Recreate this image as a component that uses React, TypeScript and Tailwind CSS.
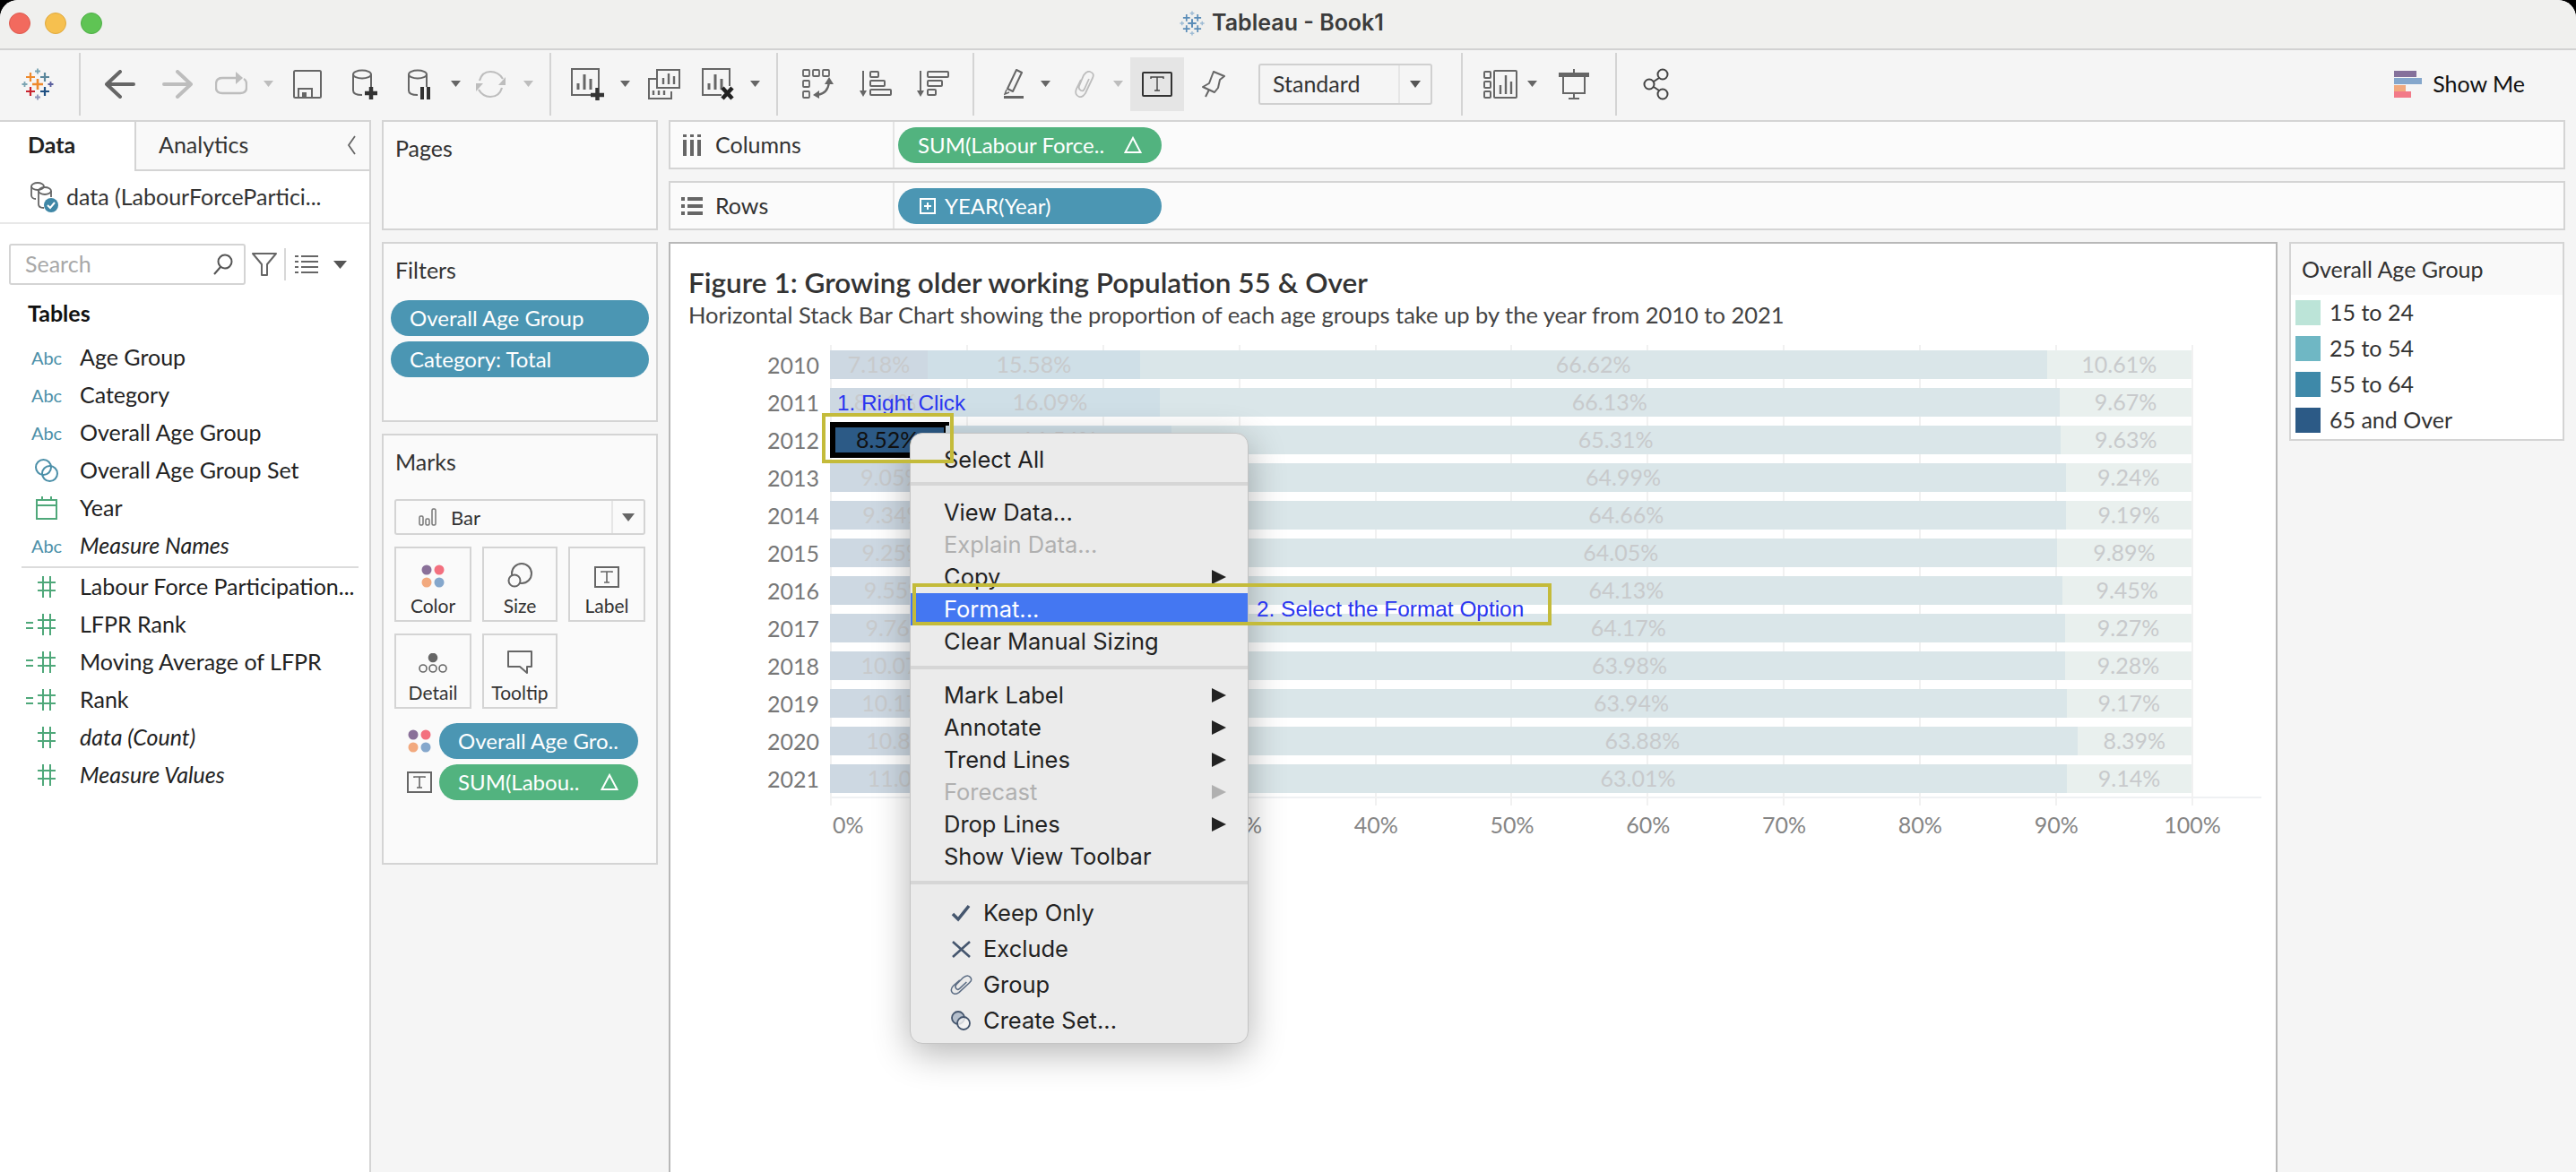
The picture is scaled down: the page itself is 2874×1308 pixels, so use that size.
import type { ReactNode } from "react";

const years = [
  { y: "2010", v: [7.18, 15.58, 66.62, 10.61] },
  { y: "2011", v: [8.11, 16.09, 66.13, 9.67] },
  { y: "2012", v: [8.52, 16.54, 65.31, 9.63] },
  { y: "2013", v: [9.05, 16.72, 64.99, 9.24] },
  { y: "2014", v: [9.34, 16.81, 64.66, 9.19] },
  { y: "2015", v: [9.25, 16.81, 64.05, 9.89] },
  { y: "2016", v: [9.55, 16.87, 64.13, 9.45] },
  { y: "2017", v: [9.76, 16.8, 64.17, 9.27] },
  { y: "2018", v: [10.07, 16.67, 63.98, 9.28] },
  { y: "2019", v: [10.17, 16.72, 63.94, 9.17] },
  { y: "2020", v: [10.84, 16.89, 63.88, 8.39] },
  { y: "2021", v: [11.02, 16.83, 63.01, 9.14] },
];

const segColors = ["bg-[#cdd8e2]", "bg-[#cfdfe7]", "bg-[#dae6e9]", "bg-[#e9f0ee]"];
const ticks = ["0%", "10%", "20%", "30%", "40%", "50%", "60%", "70%", "80%", "90%", "100%"];

const Caret = ({ ml, light }: { ml: string; light?: boolean }) => (
  <svg width="11" height="8" viewBox="0 0 11 8" className={`${ml} shrink-0`}>
    <path d="M0 0H11L5.5 7Z" fill={light ? "#bdbdbd" : "#666"} />
  </svg>
);

const Sep = ({ ml }: { ml: string }) => <div className={`${ml} w-[2px] h-[70px] bg-[#d4d4d4] shrink-0`} />;

const Cross = ({ x, y, s, w, c }: { x: number; y: number; s: number; w: number; c: string }) => (
  <path d={`M${x - s} ${y}H${x + s}M${x} ${y - s}V${y + s}`} stroke={c} strokeWidth={w} />
);

const TableauLogo = ({ size = 36, mono }: { size?: number; mono?: boolean }) => (
  <svg width={size} height={size} viewBox="0 0 36 36" className="shrink-0">
    <Cross x={18} y={18} s={6} w={2.6} c={mono ? "#5b8db8" : "#ee8a2c"} />
    <Cross x={10} y={10} s={5} w={2.2} c={mono ? "#5b8db8" : "#ee8a2c"} />
    <Cross x={26} y={10} s={5} w={2.2} c={mono ? "#5b8db8" : "#5b879c"} />
    <Cross x={10} y={26} s={5} w={2.2} c={mono ? "#5b8db8" : "#c9252f"} />
    <Cross x={26} y={26} s={5} w={2.2} c={mono ? "#5b8db8" : "#1f4f82"} />
    <Cross x={18} y={3.5} s={3} w={1.8} c={mono ? "#9dbbd4" : "#7ba4b2"} />
    <Cross x={18} y={32.5} s={3} w={1.8} c={mono ? "#9dbbd4" : "#8a94bb"} />
    <Cross x={3.5} y={18} s={3} w={1.8} c={mono ? "#9dbbd4" : "#7ba4b2"} />
    <Cross x={32.5} y={18} s={3} w={1.8} c={mono ? "#9dbbd4" : "#5a5f9e"} />
  </svg>
);

const Arrow = ({ ml, flip, c }: { ml: string; flip?: boolean; c: string }) => (
  <svg width="34" height="32" viewBox="0 0 34 32" className={`${ml} shrink-0 ${flip ? "-scale-x-100" : ""}`}>
    <path d="M2 16H32M17 2L2 16L17 30" fill="none" stroke={c} strokeWidth="4" strokeLinecap="round" strokeLinejoin="round" />
  </svg>
);

const RedoIcon = ({ ml }: { ml: string }) => (
  <svg width="36" height="32" viewBox="0 0 36 32" className={`${ml} shrink-0`}>
    <path d="M24 9H8C3 9 1 12 1 16V20C1 24 3 26 8 26H28C32 26 35 24 35 20V16C35 13 34 11 32 10" fill="none" stroke="#bdbdbd" strokeWidth="2.4" />
    <path d="M23 2L31 9L23 16Z" fill="#bdbdbd" />
  </svg>
);

const SaveIcon = ({ ml }: { ml: string }) => (
  <svg width="32" height="32" viewBox="0 0 32 32" className={`${ml} shrink-0`}>
    <rect x="1" y="1" width="30" height="30" rx="1.5" fill="none" stroke="#666" strokeWidth="2" />
    <path d="M6 31V21H21V31" fill="none" stroke="#666" strokeWidth="2" />
    <rect x="10" y="25" width="5" height="6" fill="#666" />
  </svg>
);

const Cylinder = ({ children, w, ml }: { children: ReactNode; w: number; ml: string }) => (
  <svg width={w} height="34" viewBox={`0 0 ${w} 34`} className={`${ml} shrink-0`}>
    <ellipse cx="11" cy="6" rx="10" ry="4.5" fill="none" stroke="#666" strokeWidth="2" />
    <path d="M1 6V24C1 27 4 29 11 29M21 6V20" fill="none" stroke="#666" strokeWidth="2" />
    {children}
  </svg>
);

const RefreshIcon = ({ ml }: { ml: string }) => (
  <svg width="33" height="32" viewBox="0 0 33 32" className={`${ml} shrink-0`}>
    <path d="M4 12C6 5 11 2 16 2C22 2 27 5 30 10M29 20C27 27 22 30 16 30C11 30 6 27 3 22" fill="none" stroke="#bdbdbd" strokeWidth="2.2" />
    <path d="M33 8V17H25Z" fill="#bdbdbd" />
    <path d="M0 24V15H8Z" fill="#bdbdbd" />
  </svg>
);

const SheetBars = ({ x = 0, y = 0 }: { x?: number; y?: number }) => (
  <g transform={`translate(${x} ${y})`}>
    <path d="M8 24V17M15 24V7M22 24V12" stroke="#666" strokeWidth="3" fill="none" />
  </g>
);

const NewSheetIcon = ({ ml }: { ml: string }) => (
  <svg width="37" height="36" viewBox="0 0 37 36" className={`${ml} shrink-0`}>
    <path d="M23 30H1V1H31V22" fill="none" stroke="#666" strokeWidth="2" />
    <SheetBars />
    <path d="M22 30H37M29.5 22V36" stroke="#333" strokeWidth="4.5" />
  </svg>
);

const DupIcon = ({ ml }: { ml: string }) => (
  <svg width="36" height="34" viewBox="0 0 36 34" className={`${ml} shrink-0`}>
    <path d="M9 11H1V33H26V25" fill="none" stroke="#666" strokeWidth="2" />
    <rect x="10" y="1" width="25" height="20" fill="none" stroke="#666" strokeWidth="2" />
    <path d="M17 17V10M23 17V5M29 17V8" stroke="#666" strokeWidth="2.4" />
    <path d="M6 24V29M12 24V29M18 24V29" stroke="#666" strokeWidth="2.4" />
  </svg>
);

const ClearIcon = ({ ml }: { ml: string }) => (
  <svg width="36" height="36" viewBox="0 0 36 36" className={`${ml} shrink-0`}>
    <path d="M22 30H1V1H31V20" fill="none" stroke="#666" strokeWidth="2" />
    <SheetBars />
    <path d="M23 22L34 34M34 22L23 34" stroke="#222" strokeWidth="4.5" />
  </svg>
);

const SwapIcon = ({ ml }: { ml: string }) => (
  <svg width="35" height="34" viewBox="0 0 35 34" className={`${ml} shrink-0`}>
    <g fill="none" stroke="#666" strokeWidth="1.8">
      <rect x="1" y="1" width="7" height="7" rx="1" />
      <rect x="12" y="1" width="7" height="7" rx="1" />
      <rect x="23" y="1" width="7" height="7" rx="1" />
      <rect x="1" y="13" width="7" height="7" rx="1" />
      <rect x="1" y="25" width="7" height="7" rx="1" />
      <path d="M17 29C24 28 29 23 30 15" strokeWidth="2.2" />
    </g>
    <path d="M30 9L35 17H25Z M12 29L19 24V33Z" fill="#666" />
  </svg>
);

const SortIcon = ({ ml, desc }: { ml: string; desc?: boolean }) => (
  <svg width="36" height="30" viewBox="0 0 36 30" className={`${ml} shrink-0`}>
    <path d="M4 0V24" stroke="#666" strokeWidth="2" />
    <path d="M0 22H8L4 29Z" fill="#666" />
    <g fill="none" stroke="#666" strokeWidth="2">
      <rect x="12" y="1" width={desc ? 23 : 9} height="6" rx="1" />
      <rect x="12" y="11" width="16" height="6" rx="1" />
      <rect x="12" y="21" width={desc ? 9 : 23} height="6" rx="1" />
    </g>
  </svg>
);

const PenIcon = ({ ml }: { ml: string }) => (
  <svg width="22" height="34" viewBox="0 0 22 34" className={`${ml} shrink-0`}>
    <path d="M14 1L20 4L10 25L4 22Z" fill="none" stroke="#666" strokeWidth="2" strokeLinejoin="round" />
    <path d="M3 23L1 28L6 26" fill="none" stroke="#666" strokeWidth="1.5" />
    <rect x="0" y="30" width="22" height="3" fill="#666" />
  </svg>
);

const ClipIcon = ({ ml, c = "#bdbdbd", w = 25, h = 30 }: { ml: string; c?: string; w?: number; h?: number }) => (
  <svg width={w} height={h} viewBox="0 0 25 30" className={`${ml} shrink-0`}>
    <path d="M9 10L4 20C2 25 4 28 7 29C10 30 12 28 14 25L22 8C24 4 22 2 19 1C16 0 14 2 12 5L7 17C6 20 7 21 9 22C11 23 12 22 13 20L18 9" fill="none" stroke={c} strokeWidth="1.8" />
  </svg>
);

const PinIcon = ({ ml }: { ml: string }) => (
  <svg width="26" height="30" viewBox="0 0 26 30" className={`${ml} shrink-0`}>
    <path d="M13 1L25 6L20 10L18 19L14 24L1 18L8 14L11 6Z M8 21L4 29" fill="none" stroke="#666" strokeWidth="2" strokeLinejoin="round" />
  </svg>
);

const CardsIcon = ({ ml }: { ml: string }) => (
  <svg width="38" height="34" viewBox="0 0 38 34" className={`${ml} shrink-0`}>
    <g fill="none" stroke="#666" strokeWidth="2">
      <rect x="1" y="3" width="7" height="7" rx="1" />
      <rect x="1" y="14" width="7" height="7" rx="1" />
      <rect x="1" y="25" width="7" height="7" rx="1" />
      <rect x="12" y="2" width="25" height="30" rx="1" />
    </g>
    <path d="M19 28V18M25 28V7M31 28V14" stroke="#666" strokeWidth="2.4" />
  </svg>
);

const PresentIcon = ({ ml }: { ml: string }) => (
  <svg width="34" height="34" viewBox="0 0 34 34" className={`${ml} shrink-0`}>
    <path d="M17 0V4" stroke="#666" strokeWidth="2" />
    <rect x="0" y="4" width="34" height="5" fill="#666" />
    <path d="M5 9V27H29V9M17 27V33M11 33H23" fill="none" stroke="#666" strokeWidth="2" />
  </svg>
);

const ShareIcon = ({ ml }: { ml: string }) => (
  <svg width="29" height="36" viewBox="0 0 29 36" className={`${ml} shrink-0`}>
    <g fill="none" stroke="#444" strokeWidth="2">
      <circle cx="22" cy="7" r="5.5" />
      <circle cx="7" cy="18" r="5.5" />
      <circle cx="22" cy="29" r="5.5" />
      <path d="M12 15L18 11M12 21L18 25" />
    </g>
  </svg>
);

const ShowMeIcon = () => (
  <svg width="32" height="30" viewBox="0 0 32 30" className="shrink-0">
    <rect x="0" y="0" width="25" height="7" fill="#85719b" />
    <rect x="0" y="8" width="31" height="7" fill="#85a7cc" />
    <rect x="0" y="16" width="13" height="7" fill="#f2a97e" />
    <rect x="0" y="23" width="19" height="7" fill="#f27a88" />
  </svg>
);

const ColorDots = () => (
  <svg width="26" height="26" viewBox="0 0 26 26" className="shrink-0">
    <circle cx="6" cy="6" r="5.5" fill="#8a7099" />
    <circle cx="20" cy="6" r="5.5" fill="#f3707f" />
    <circle cx="6" cy="20" r="5.5" fill="#f2a97e" />
    <circle cx="20" cy="20" r="5.5" fill="#85a7cc" />
  </svg>
);

const LabelT = () => (
  <svg width="28" height="24" viewBox="0 0 28 24" className="shrink-0">
    <rect x="1" y="1" width="26" height="22" fill="none" stroke="#666" strokeWidth="2" />
    <path d="M8 7V6H20V7M14 6V18M11 18H17" fill="none" stroke="#666" strokeWidth="1.6" />
  </svg>
);

const FieldIcon = ({ kind }: { kind: string }) => {
  if (kind === "abc")
    return <span className="w-[64px] text-center text-[20px] text-[#4b8fa8]">Abc</span>;
  if (kind === "set")
    return (
      <span className="w-[64px] flex justify-center">
        <svg width="28" height="28" viewBox="0 0 28 28" fill="none" stroke="#4b8fa8" strokeWidth="2">
          <circle cx="10.5" cy="10.5" r="8.5" />
          <circle cx="17.5" cy="17.5" r="8.5" />
        </svg>
      </span>
    );
  if (kind === "date")
    return (
      <span className="w-[64px] flex justify-center">
        <svg width="24" height="26" viewBox="0 0 24 26" fill="none" stroke="#4fa87a" strokeWidth="2">
          <rect x="1" y="4" width="22" height="21" />
          <path d="M1 10H23M7 0V5M17 0V5" />
        </svg>
      </span>
    );
  return (
    <span className="w-[64px] flex justify-center relative">
      <svg width="22" height="26" viewBox="0 0 22 26" fill="none" stroke="#4fa87a" strokeWidth="2">
        <path d="M7 1V25M15 1V25M1 8H21M1 17H21" />
      </svg>
      {kind === "calc" && (
        <svg width="8" height="10" viewBox="0 0 8 10" className="absolute left-[9px] top-[9px]" stroke="#4fa87a" strokeWidth="2">
          <path d="M0 2H8M0 8H8" />
        </svg>
      )}
    </span>
  );
};

const fields = [
  { k: "abc", t: "Age Group" },
  { k: "abc", t: "Category" },
  { k: "abc", t: "Overall Age Group" },
  { k: "set", t: "Overall Age Group Set" },
  { k: "date", t: "Year" },
  { k: "abc", t: "Measure Names", i: true },
];

const measures = [
  { k: "num", t: "Labour Force Participation..." },
  { k: "calc", t: "LFPR Rank" },
  { k: "calc", t: "Moving Average of LFPR" },
  { k: "calc", t: "Rank" },
  { k: "num", t: "data (Count)", i: true },
  { k: "num", t: "Measure Values", i: true },
];

const FieldRow = ({ k, t, i }: { k: string; t: string; i?: boolean }) => (
  <div className="h-[42px] flex items-center pl-[20px]">
    <FieldIcon kind={k} />
    <span className={`ml-[5px] text-[25px] text-[#222] whitespace-nowrap ${i ? "italic" : ""}`}>{t}</span>
  </div>
);

const Pill = ({ color, className, children }: { color: string; className: string; children: ReactNode }) => (
  <div className={`${color} ${className} h-[40px] rounded-[20px] flex items-center text-white text-[24px] whitespace-nowrap`}>{children}</div>
);

const Delta = () => (
  <svg width="20" height="20" viewBox="0 0 20 20" className="shrink-0">
    <path d="M10 2L18.5 18H1.5Z" fill="none" stroke="#fff" strokeWidth="2" />
  </svg>
);

const MarkCard = ({ label, w, icon }: { label: string; w: string; icon: ReactNode }) => (
  <div className={`${w} h-[84px] border-2 border-[#d4d4d4] flex flex-col items-center`}>
    <div className="h-[44px] flex items-end">{icon}</div>
    <span className="mt-[8px] text-[21px] leading-[24px] text-[#333]">{label}</span>
  </div>
);

const MenuItem = ({ t, y, sub, off, on }: { t: string; y?: string; sub?: boolean; off?: boolean; on?: boolean }) => (
  <div className={`${y ?? "h-[36px]"} ${on ? "bg-[#4477f2] text-white" : off ? "text-[#b0b0b0]" : "text-[#222]"} pl-[37px] pr-[24px] flex items-center justify-between`}>
    <span>{t}</span>
    {sub && (
      <svg width="16" height="16" viewBox="0 0 16 16">
        <path d="M0 0L16 8L0 16Z" fill={off ? "#b0b0b0" : "#222"} />
      </svg>
    )}
  </div>
);

const IconItem = ({ t, icon }: { t: string; icon: ReactNode }) => (
  <div className="h-[40px] flex items-center text-[#222]">
    <span className="w-[81px] flex justify-end pr-[14px]">{icon}</span>
    <span>{t}</span>
  </div>
);

const MenuSep = ({ cls }: { cls: string }) => <div className={`${cls} h-[4px] bg-[#d6d6d6]`} />;

export default function App() {
  return (
    <div className="relative w-[2874px] h-[1308px] overflow-hidden bg-black font-[family-name:'Lato',sans-serif]">
      <div className="w-full h-full rounded-t-[20px] overflow-hidden bg-[#f5f5f5] flex flex-col">
        {/* title bar */}
        <div className="h-[56px] shrink-0 border-b-2 border-[#d2d2d2] bg-[#f0f0ee] relative flex items-center justify-center">
          <div className="absolute left-[10px] top-[14px] flex gap-[16px]">
            <div className="w-[24px] h-[24px] rounded-full bg-[#f26a5e] border border-[#dd5a4f]" />
            <div className="w-[24px] h-[24px] rounded-full bg-[#f6c04f] border border-[#dfa93e]" />
            <div className="w-[24px] h-[24px] rounded-full bg-[#5fc454] border border-[#4fae47]" />
          </div>
          <div className="flex items-center gap-[8px] ml-[-14px] pb-[2px]">
            <TableauLogo size={28} mono />
            <span className="text-[25px] font-semibold text-[#3c3c3c] font-[family-name:'Inter',sans-serif]">Tableau - Book1</span>
          </div>
        </div>

        {/* toolbar */}
        <div className="h-[78px] shrink-0 flex items-center pb-[2px]">
          <div className="ml-[24px]">
            <TableauLogo />
          </div>
          <Sep ml="ml-[28px]" />
          <Arrow ml="ml-[27px]" c="#666" />
          <Arrow ml="ml-[30px]" c="#bdbdbd" flip />
          <RedoIcon ml="ml-[25px]" />
          <Caret ml="ml-[18px]" light />
          <SaveIcon ml="ml-[22px]" />
          <Cylinder w={28} ml="ml-[34px]">
            <path d="M14 27H28M21 20V34" stroke="#333" strokeWidth="4.5" />
          </Cylinder>
          <Cylinder w={26} ml="ml-[34px]">
            <path d="M16 20V34M23 20V34" stroke="#333" strokeWidth="4" />
          </Cylinder>
          <Caret ml="ml-[22px]" />
          <RefreshIcon ml="ml-[17px]" />
          <Caret ml="ml-[20px]" light />
          <Sep ml="ml-[18px]" />
          <NewSheetIcon ml="ml-[22px]" />
          <Caret ml="ml-[18px]" />
          <DupIcon ml="ml-[20px]" />
          <ClearIcon ml="ml-[24px]" />
          <Caret ml="ml-[18px]" />
          <Sep ml="ml-[18px]" />
          <SwapIcon ml="ml-[27px]" />
          <SortIcon ml="ml-[29px]" />
          <SortIcon ml="ml-[28px]" desc />
          <Sep ml="ml-[26px]" />
          <PenIcon ml="ml-[33px]" />
          <Caret ml="ml-[19px]" />
          <ClipIcon ml="ml-[25px]" />
          <Caret ml="ml-[20px]" light />
          <div className="ml-[8px] w-[60px] h-[60px] bg-[#e5e5e5] flex items-center justify-center shrink-0">
            <svg width="34" height="28" viewBox="0 0 34 28">
              <rect x="1" y="1" width="32" height="26" rx="1" fill="none" stroke="#333" strokeWidth="2" />
              <path d="M10 8V6H24V8M17 6V21M14 21H20" fill="none" stroke="#444" strokeWidth="1.4" />
            </svg>
          </div>
          <PinIcon ml="ml-[20px]" />
          <div className="ml-[37px] w-[194px] h-[46px] shrink-0 border-2 border-[#d0d0d0] rounded-[3px] flex items-center">
            <span className="flex-1 pl-[14px] text-[25px] text-[#333]">Standard</span>
            <div className="w-[36px] h-full border-l-2 border-[#e6e6e6] flex items-center justify-center">
              <svg width="12" height="9" viewBox="0 0 12 9">
                <path d="M0 0H12L6 8Z" fill="#555" />
              </svg>
            </div>
          </div>
          <Sep ml="ml-[32px]" />
          <CardsIcon ml="ml-[23px]" />
          <Caret ml="ml-[11px]" />
          <PresentIcon ml="ml-[24px]" />
          <Sep ml="ml-[29px]" />
          <ShareIcon ml="ml-[29px]" />
          <div className="ml-auto mr-[57px] flex items-center gap-[11px]">
            <ShowMeIcon />
            <span className="text-[25px] text-[#111]">Show Me</span>
          </div>
        </div>

        {/* main */}
        <div className="flex-1 flex min-h-0">
          {/* data pane */}
          <div className="w-[414px] shrink-0 bg-white border-r-2 border-t-2 border-[#d4d4d4] flex flex-col">
            <div className="h-[55px] flex shrink-0">
              <div className="w-[150px] flex items-center pl-[31px] pb-[3px] text-[25px] font-bold text-[#222]">Data</div>
              <div className="flex-1 bg-[#f9f9f9] border-l-2 border-b-2 border-[#d4d4d4] flex items-center pl-[25px] pr-[15px] pb-[2px] justify-between text-[25px] text-[#333]">
                <span>Analytics</span>
                <svg width="10" height="22" viewBox="0 0 10 22" fill="none" stroke="#666" strokeWidth="1.8">
                  <path d="M9 1L2 11L9 21" />
                </svg>
              </div>
            </div>
            <div className="h-[59px] shrink-0 flex items-center pl-[33px] border-b-2 border-[#e8e8e8]">
              <svg width="32" height="36" viewBox="0 0 32 36" className="shrink-0">
                <g fill="none" stroke="#666" strokeWidth="1.8">
                  <ellipse cx="9" cy="6" rx="7" ry="4" />
                  <path d="M2 6V16C2 18 4 20 7 20" />
                  <ellipse cx="17" cy="11" rx="7" ry="4" />
                  <path d="M10 11V26C10 29 12 30 16 30M24 11V18" />
                </g>
                <circle cx="24" cy="27" r="8" fill="#3f87a6" />
                <path d="M20 27L23 30L28 24" fill="none" stroke="#fff" strokeWidth="2" />
              </svg>
              <span className="ml-[9px] text-[25px] text-[#333] whitespace-nowrap">data (LabourForcePartici...</span>
            </div>
            <div className="mt-[22px] h-[46px] flex items-center shrink-0">
              <div className="ml-[10px] w-[264px] h-[46px] border-2 border-[#d4d4d4] rounded-[3px] flex items-center justify-between pl-[16px] pr-[12px]">
                <span className="text-[25px] text-[#a8a8a8]">Search</span>
                <svg width="22" height="24" viewBox="0 0 22 24" fill="none" stroke="#555" strokeWidth="2">
                  <circle cx="13" cy="9" r="7.5" />
                  <path d="M8 15L1 23" />
                </svg>
              </div>
              <svg width="28" height="28" viewBox="0 0 28 28" className="ml-[7px]" fill="none" stroke="#666" strokeWidth="2">
                <path d="M1 2H27L17 14V26H11V14Z" strokeLinejoin="round" />
              </svg>
              <div className="ml-[8px] w-[2px] h-[36px] bg-[#d8d8d8]" />
              <svg width="26" height="22" viewBox="0 0 26 22" className="ml-[10px]" stroke="#666" strokeWidth="2">
                <path d="M0 2H4M7 2H26M0 8H4M7 8H26M0 14H4M7 14H26M0 20H4M7 20H26" />
              </svg>
              <svg width="15" height="9" viewBox="0 0 15 9" className="ml-[17px]">
                <path d="M0 0H15L7.5 9Z" fill="#555" />
              </svg>
            </div>
            <div className="mt-[15px] pl-[31px] h-[34px] flex items-center text-[25px] font-bold text-[#111]">Tables</div>
            <div className="mt-[11px]">
              {fields.map((f) => (
                <FieldRow key={f.t} {...f} />
              ))}
            </div>
            <div className="ml-[24px] w-[376px] h-[2px] bg-[#dcdcdc] mt-[2px]" />
            <div>
              {measures.map((f) => (
                <FieldRow key={f.t} {...f} />
              ))}
            </div>
          </div>

          {/* cards column */}
          <div className="w-[308px] shrink-0 ml-[12px] flex flex-col gap-[13px]">
            <div className="h-[123px] border-2 border-[#d4d4d4] bg-[#fafafa] pl-[13px] pt-[11px] text-[25px] text-[#333]">Pages</div>
            <div className="h-[201px] border-2 border-[#d4d4d4] bg-[#fafafa] pt-[14px]">
              <div className="pl-[13px] text-[25px] text-[#333] leading-[30px]">Filters</div>
              <div className="mt-[19px] ml-[8px] flex flex-col gap-[6px]">
                <Pill color="bg-[#4b96b3]" className="w-[288px] pl-[21px]">Overall Age Group</Pill>
                <Pill color="bg-[#4b96b3]" className="w-[288px] pl-[21px]">Category: Total</Pill>
              </div>
            </div>
            <div className="h-[481px] border-2 border-[#d4d4d4] bg-[#fafafa] pt-[14px]">
              <div className="pl-[13px] text-[25px] text-[#333] leading-[30px]">Marks</div>
              <div className="mt-[27px] ml-[12px] w-[280px] h-[40px] border-2 border-[#d4d4d4] rounded-[3px] flex items-center">
                <div className="flex-1 flex items-center pl-[25px] gap-[16px] text-[22px] text-[#333]">
                  <svg width="20" height="20" viewBox="0 0 20 20" fill="none" stroke="#777" strokeWidth="1.5">
                    <rect x="1" y="9" width="4" height="10" rx="1.5" />
                    <rect x="8" y="12" width="4" height="7" rx="1.5" />
                    <rect x="15" y="1" width="4" height="18" rx="1.5" />
                  </svg>
                  <span>Bar</span>
                </div>
                <div className="w-[36px] h-full border-l-2 border-[#e6e6e6] flex items-center justify-center">
                  <svg width="14" height="9" viewBox="0 0 14 9">
                    <path d="M0 0H14L7 9Z" fill="#666" />
                  </svg>
                </div>
              </div>
              <div className="mt-[13px] ml-[12px] flex gap-[12px]">
                <MarkCard label="Color" w="w-[86px]" icon={<ColorDots />} />
                <MarkCard label="Size" w="w-[84px]" icon={
                  <svg width="28" height="28" viewBox="0 0 28 28" fill="none" stroke="#666" strokeWidth="2">
                    <circle cx="16" cy="12" r="11" />
                    <circle cx="8" cy="20" r="6.5" fill="#fafafa" />
                  </svg>
                } />
                <MarkCard label="Label" w="w-[86px]" icon={<LabelT />} />
              </div>
              <div className="mt-[13px] ml-[12px] flex gap-[12px]">
                <MarkCard label="Detail" w="w-[86px]" icon={
                  <svg width="32" height="24" viewBox="0 0 32 24" fill="none" stroke="#666" strokeWidth="1.6">
                    <circle cx="16" cy="5" r="4.5" fill="#666" />
                    <circle cx="5" cy="17" r="4" />
                    <circle cx="16" cy="17" r="4" />
                    <circle cx="27" cy="17" r="4" />
                  </svg>
                } />
                <MarkCard label="Tooltip" w="w-[84px]" icon={
                  <svg width="28" height="27" viewBox="0 0 28 27" fill="none" stroke="#666" strokeWidth="2">
                    <path d="M1 1H27V18H22V25L14 18H1Z" strokeLinejoin="round" />
                  </svg>
                } />
              </div>
              <div className="mt-[16px] ml-[27px] flex items-center">
                <ColorDots />
                <Pill color="bg-[#4b96b3]" className="ml-[9px] w-[222px] pl-[21px]">Overall Age Gro..</Pill>
              </div>
              <div className="mt-[6px] ml-[26px] flex items-center">
                <LabelT />
                <Pill color="bg-[#52b37f]" className="ml-[8px] w-[222px] pl-[21px] pr-[22px] justify-between">
                  <span>SUM(Labou..</span>
                  <Delta />
                </Pill>
              </div>
            </div>
          </div>

          {/* shelves + view */}
          <div className="flex-1 min-w-0 ml-[12px] mr-[12px] flex flex-col gap-[13px]">
            <div className="h-[55px] shrink-0 border-2 border-[#d4d4d4] bg-[#fbfbfb] flex items-center">
              <div className="w-[250px] h-full flex items-center border-r-2 border-[#e4e4e4] pl-[14px] text-[25px] text-[#333]">
                <svg width="20" height="24" viewBox="0 0 20 24" stroke="#666" strokeWidth="4">
                  <path d="M2 6V24M10 6V24M18 6V24" />
                  <path d="M2 0V3M10 0V3M18 0V3" />
                </svg>
                <span className="ml-[16px]">Columns</span>
              </div>
              <Pill color="bg-[#52b37f]" className="ml-[4px] w-[294px] pl-[22px] pr-[22px] justify-between">
                <span>SUM(Labour Force..</span>
                <Delta />
              </Pill>
            </div>
            <div className="h-[55px] shrink-0 border-2 border-[#d4d4d4] bg-[#fbfbfb] flex items-center">
              <div className="w-[250px] h-full flex items-center border-r-2 border-[#e4e4e4] pl-[12px] text-[25px] text-[#333]">
                <svg width="24" height="20" viewBox="0 0 24 20" stroke="#666" strokeWidth="4">
                  <path d="M7 2H24M7 10H24M7 18H24M0 2H4M0 10H4M0 18H4" />
                </svg>
                <span className="ml-[14px]">Rows</span>
              </div>
              <Pill color="bg-[#4b96b3]" className="ml-[4px] w-[294px] pl-[24px] gap-[10px]">
                <svg width="18" height="18" viewBox="0 0 18 18" fill="none" stroke="#fff" strokeWidth="2" className="shrink-0">
                  <rect x="1" y="1" width="16" height="16" />
                  <path d="M5 9H13M9 5V13" />
                </svg>
                <span>YEAR(Year)</span>
              </Pill>
            </div>

            <div className="flex-1 min-h-0 flex gap-[13px]">
              {/* view */}
              <div className="w-[1795px] shrink-0 h-[1100px] bg-white border-2 border-[#b8b8b8] pl-[20px] pt-[25px]">
                <div className="text-[31.5px] leading-[36px] font-semibold text-[#333] whitespace-nowrap">Figure 1: Growing older working Population 55 &amp; Over</div>
                <div className="text-[25.5px] leading-[36px] text-[#444] whitespace-nowrap">Horizontal Stack Bar Chart showing the proportion of each age groups take up by the year from 2010 to 2021</div>
                <div className="mt-[22px] ml-[158px] w-[1597px] relative">
                  {/* gridlines */}
                  <div className="absolute left-0 top-[-6px] h-[514px] w-[1521px] flex justify-between">
                    {ticks.map((t) => (
                      <div key={t} className="w-[2px] bg-[#f1f1f1]" />
                    ))}
                  </div>
                  <div className="relative flex flex-col gap-[10px] w-[1519px]">
                    {years.map((r) => (
                      <div key={r.y} className="h-[32px] flex relative">
                        <span className="absolute right-full mr-[12px] text-[25px] leading-[32px] text-[#777]">{r.y}</span>
                        {r.v.map((val, i) => {
                          const picked = r.y === "2012" && i === 0;
                          return (
                            <div
                              key={i}
                              className={`${segColors[i]} relative flex items-center justify-center text-[25px] text-[#c8cacc] whitespace-nowrap`}
                              style={{ width: `${val}%` }}
                            >
                              {picked ? (
                                <div className="absolute top-[-4px] bottom-[-4px] left-0 right-[-4px] border-[6px] border-black bg-[#2c5a86] text-[#111] flex items-center justify-center pr-[6px]">
                                  8.52%
                                </div>
                              ) : (
                                `${val.toFixed(2)}%`
                              )}
                            </div>
                          );
                        })}
                      </div>
                    ))}
                  </div>
                  <div className="mt-[4px] h-[2px] w-[1597px] bg-[#eff1f3]" />
                  <div className="mt-[14px] w-[1521px] flex justify-between text-[25px] leading-[30px] text-[#858585]">
                    {ticks.map((t, i) => (
                      <div key={t} className={`w-[2px] flex ${i === 0 ? "justify-start pl-[3px]" : "justify-center"}`}>
                        <span>{t}</span>
                      </div>
                    ))}
                  </div>
                </div>
              </div>

              {/* legend */}
              <div className="w-[307px] h-[222px] border-2 border-[#d4d4d4] bg-white">
                <div className="h-[57px] bg-[#f9f9f9] flex items-center pl-[12px] text-[25px] text-[#333]">Overall Age Group</div>
                <div className="pl-[5px] pt-[6px] flex flex-col gap-[12px]">
                  {[
                    ["bg-[#bce4d8]", "15 to 24"],
                    ["bg-[#6fb7c4]", "25 to 54"],
                    ["bg-[#3e89a9]", "55 to 64"],
                    ["bg-[#2c5a86]", "65 and Over"],
                  ].map(([c, t]) => (
                    <div key={t} className="h-[28px] flex items-center">
                      <div className={`${c} w-[28px] h-[28px]`} />
                      <span className="ml-[10px] text-[25px] text-[#333]">{t}</span>
                    </div>
                  ))}
                </div>
              </div>
            </div>
          </div>
        </div>
      </div>

      {/* context menu */}
      <div className="absolute left-[1015px] top-[483px] w-[378px] h-[682px] rounded-[14px] bg-[#ebebeb] border border-[#c4c4c4] shadow-[0_10px_40px_rgba(0,0,0,0.3)] overflow-hidden text-[25.5px] font-[family-name:'Inter',sans-serif]">
        <div className="h-[11px]" />
        <MenuItem t="Select All" />
        <MenuSep cls="mt-[7px] mb-[12px]" />
        <MenuItem t="View Data..." />
        <MenuItem t="Explain Data..." off />
        <MenuItem t="Copy" sub />
        <MenuItem t="Format..." on />
        <MenuItem t="Clear Manual Sizing" />
        <MenuSep cls="mt-[9px] mb-[11px]" />
        <MenuItem t="Mark Label" sub />
        <MenuItem t="Annotate" sub />
        <MenuItem t="Trend Lines" sub />
        <MenuItem t="Forecast" sub off />
        <MenuItem t="Drop Lines" sub />
        <MenuItem t="Show View Toolbar" />
        <MenuSep cls="mt-[9px] mb-[12px]" />
        <IconItem t="Keep Only" icon={
          <svg width="22" height="20" viewBox="0 0 22 20" fill="none" stroke="#45566e" strokeWidth="3.5">
            <path d="M2 11L8 17L20 2" />
          </svg>
        } />
        <IconItem t="Exclude" icon={
          <svg width="21" height="19" viewBox="0 0 21 19" fill="none" stroke="#45566e" strokeWidth="2.6">
            <path d="M1 1L20 18M20 1L1 18" />
          </svg>
        } />
        <IconItem t="Group" icon={<ClipIcon ml="rotate-[22deg]" c="#5d6e85" w={22} h={26} />} />
        <IconItem t="Create Set..." icon={
          <svg width="22" height="22" viewBox="0 0 22 22" stroke="#45566e" strokeWidth="1.8">
            <circle cx="8" cy="8" r="7" fill="#b5bfcc" />
            <circle cx="14" cy="14" r="7" fill="#f5f5f5" fillOpacity="0.8" />
          </svg>
        } />
      </div>

      {/* annotations drawn on top of the screenshot */}
      <span className="absolute left-[934px] top-[435px] text-[24.3px] leading-[30px] text-[#2a35f0] whitespace-nowrap font-[family-name:'Liberation_Sans',sans-serif]">1. Right Click</span>
      <div className="absolute left-[917px] top-[461px] w-[147px] h-[56px] border-[4px] border-[#c4bb3a]" />
      <span className="absolute left-[1402px] top-[665px] text-[24.4px] leading-[30px] text-[#2a35f0] whitespace-nowrap font-[family-name:'Liberation_Sans',sans-serif]">2. Select the Format Option</span>
      <div className="absolute left-[1018px] top-[651px] w-[713px] h-[47px] border-[4px] border-[#c4bb3a]" />
    </div>
  );
}
